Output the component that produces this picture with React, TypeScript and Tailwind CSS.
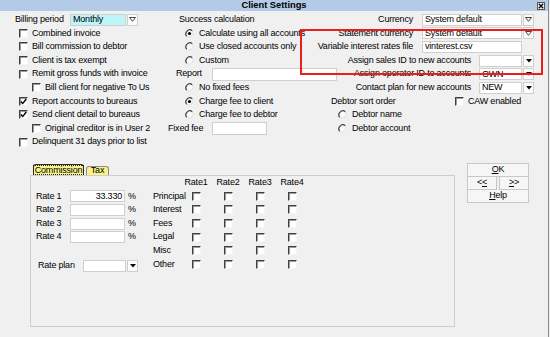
const ROW = 'flex h-[13.6px] items-center whitespace-nowrap';

function Check({ checked = false }: { checked?: boolean }) {
  return (
    <span className="inline-flex w-[9px] h-[9px] shrink-0 items-center justify-center bg-white border border-t-[#404040] border-l-[#404040] border-r-[#f4f4f4] border-b-[#f4f4f4] shadow-[inset_1px_1px_0_#9a9a9a]">
      {checked && (
        <svg width="7" height="7" viewBox="0 0 7 7">
          <path d="M0.8 3.4 L2.7 5.4 L6.3 1" stroke="#000" strokeWidth="1.4" fill="none" />
        </svg>
      )}
    </span>
  );
}

function Radio({ checked = false }: { checked?: boolean }) {
  return (
    <svg width="9" height="9" viewBox="0 0 9 9" className="shrink-0">
      <circle cx="4.5" cy="4.5" r="4" fill="#fafafa" />
      <path d="M7.3 1.7 A4 4 0 0 0 1.7 7.3" stroke="#3a3a3a" strokeWidth="1.2" fill="none" />
      <path d="M1.7 7.3 A4 4 0 0 0 7.3 1.7" stroke="#dcdcdc" strokeWidth="1" fill="none" />
      {checked && <circle cx="4.5" cy="4.5" r="1.6" fill="#000" />}
    </svg>
  );
}

function DropBtn({ filled = false }: { filled?: boolean }) {
  return (
    <span className="ml-[1px] inline-flex w-[11px] h-[12px] shrink-0 items-center justify-center bg-[#fbfbfb] border border-[#cfcfcf]">
      {filled ? (
        <svg width="6" height="4" viewBox="0 0 6 4">
          <path d="M0 0 H6 L3 3.5 Z" fill="#000" />
        </svg>
      ) : (
        <svg width="7" height="5" viewBox="0 0 7 5">
          <path d="M0.5 0.5 H6.5 L3.5 4.3 Z" stroke="#333" strokeWidth="0.9" fill="none" />
        </svg>
      )}
    </span>
  );
}

function Field({ className, value = '', right = false }: { className: string; value?: string; right?: boolean }) {
  return (
    <span
      className={`inline-flex h-[12px] shrink-0 items-center border border-[#cfcfcf] px-[2px] leading-none overflow-hidden ${
        right ? 'justify-end' : ''
      } ${className}`}
    >
      {value}
    </span>
  );
}

function CheckLabel({ text, checked, indent }: { text: string; checked?: boolean; indent?: boolean }) {
  return (
    <div className={`flex items-center gap-[4px] w-[168px] ${indent ? 'pl-[32px]' : 'pl-[19px]'}`}>
      <Check checked={checked} />
      <span>{text}</span>
    </div>
  );
}

function RadioLabel({ text, checked }: { text: string; checked?: boolean }) {
  return (
    <div className="flex items-center gap-[5px]">
      <Radio checked={checked} />
      <span>{text}</span>
    </div>
  );
}

const rateRows = ['Principal', 'Interest', 'Fees', 'Legal', 'Misc', 'Other'];

export default function App() {
  return (
    <div className="relative flex w-[550px] h-[337px] overflow-hidden bg-[#f0f0f0] text-[9px] tracking-[-0.2px] text-black font-['Liberation_Sans',Arial,sans-serif]">
      <div className="flex w-[548px] flex-col">
        {/* title bar */}
        <div className="grid h-[11px] grid-cols-[1fr_auto_1fr] items-center bg-[#b3cbe6]">
          <span />
          <span className="text-[9.3px] font-bold tracking-normal leading-none">Client Settings</span>
          <span className="mr-[3px] flex h-[8px] w-[8px] items-center justify-center justify-self-end border border-[#555] bg-[#f4f4f4]">
            <svg width="6" height="6" viewBox="0 0 6 6">
              <path d="M0.8 0.8 L5.2 5.2 M5.2 0.8 L0.8 5.2" stroke="#000" strokeWidth="1.3" />
            </svg>
          </span>
        </div>

        <div className="flex flex-col pt-[2px]">
          {/* row 0 */}
          <div className={ROW}>
            <div className="flex w-[168px] items-center pl-[15px]">
              <span className="w-[55px]">Billing period</span>
              <Field className="w-[56px] bg-[#bdf5f9]" value="Monthly" />
              <DropBtn />
            </div>
            <div className="w-[140px] pl-[11px]">Success calculation</div>
            <div className="flex flex-1 items-center justify-end pr-[14px]">
              <span className="mr-[9px]">Currency</span>
              <Field className="w-[100px] bg-white" value="System default" />
              <DropBtn />
            </div>
          </div>

          {/* row 1 */}
          <div className={ROW}>
            <CheckLabel text="Combined invoice" />
            <div className="w-[140px] pl-[17px]">
              <RadioLabel text="Calculate using all accounts" checked />
            </div>
            <div className="flex flex-1 items-center justify-end pr-[14px]">
              <span className="mr-[9px]">Statement currency</span>
              <Field className="w-[100px] bg-white" value="System default" />
              <DropBtn />
            </div>
          </div>

          {/* row 2 */}
          <div className={ROW}>
            <CheckLabel text="Bill commission to debtor" />
            <div className="w-[140px] pl-[17px]">
              <RadioLabel text="Use closed accounts only" />
            </div>
            <div className="flex flex-1 items-center justify-end pr-[14px]">
              <span className="mr-[9px]">Variable interest rates file</span>
              <Field className="w-[100px] bg-white" value="vinterest.csv" />
              <span className="w-[12px]" />
            </div>
          </div>

          {/* row 3 */}
          <div className={ROW}>
            <CheckLabel text="Client is tax exempt" />
            <div className="w-[140px] pl-[17px]">
              <RadioLabel text="Custom" />
            </div>
            <div className="flex flex-1 items-center justify-end pr-[14px]">
              <span className="mr-[8px]">Assign sales ID to new accounts</span>
              <Field className="w-[43px] bg-white" />
              <DropBtn filled />
            </div>
          </div>

          {/* row 4 */}
          <div className={ROW}>
            <CheckLabel text="Remit gross funds with invoice" />
            <div className="flex w-[170px] items-center pl-[8px]">
              <span className="w-[36px]">Report</span>
              <Field className="w-[125px] h-[13px] bg-white" />
            </div>
            <div className="flex flex-1 items-center justify-end pr-[14px]">
              <span className="mr-[8px]">Assign operator ID to accounts</span>
              <Field className="w-[43px] bg-white" value="OWN" />
              <DropBtn filled />
            </div>
          </div>

          {/* row 5 */}
          <div className={ROW}>
            <CheckLabel text="Bill client for negative To Us" indent />
            <div className="w-[140px] pl-[17px]">
              <RadioLabel text="No fixed fees" />
            </div>
            <div className="flex flex-1 items-center justify-end pr-[14px]">
              <span className="mr-[8px]">Contact plan for new accounts</span>
              <Field className="w-[43px] bg-white" value="NEW" />
              <DropBtn filled />
            </div>
          </div>

          {/* row 6 */}
          <div className={ROW}>
            <CheckLabel text="Report accounts to bureaus" checked />
            <div className="w-[163px] pl-[17px]">
              <RadioLabel text="Charge fee to client" checked />
            </div>
            <div className="flex items-center">
              <span className="w-[124px]">Debtor sort order</span>
              <div className="flex items-center gap-[4px]">
                <Check />
                <span>CAW enabled</span>
              </div>
            </div>
          </div>

          {/* row 7 */}
          <div className={ROW}>
            <CheckLabel text="Send client detail to bureaus" checked />
            <div className="w-[163px] pl-[17px]">
              <RadioLabel text="Charge fee to debtor" />
            </div>
            <div className="pl-[7px]">
              <RadioLabel text="Debtor name" />
            </div>
          </div>

          {/* row 8 */}
          <div className={ROW}>
            <CheckLabel text="Original creditor is in User 2" indent />
            <div className="flex w-[163px] items-center">
              <span className="w-[44px]">Fixed fee</span>
              <Field className="w-[55px] h-[13px] bg-white" />
            </div>
            <div className="pl-[7px]">
              <RadioLabel text="Debtor account" />
            </div>
          </div>

          {/* row 9 */}
          <div className={ROW}>
            <CheckLabel text="Delinquent 31 days prior to list" />
          </div>
        </div>

        {/* lower block */}
        <div className="mt-[14px] flex items-start">
          <div className="ml-[30px] flex w-[425px] flex-col">
            <div className="flex h-[12px] items-end pl-[3px]">
              <div className="flex h-[11px] w-[51px] items-center justify-center rounded-t-[3px] border border-b-0 border-[#2a2a2a] bg-[#f8f48a]">
                <span className="border border-dotted border-[#222] px-[1px] leading-[8px]">Commission</span>
              </div>
              <div className="ml-[2px] flex h-[9px] w-[23px] items-center justify-center rounded-t-[3px] border border-b-0 border-[#8a8a8a] bg-[#f8f48a] leading-none">
                Tax
              </div>
            </div>
            <div className="flex h-[152px] border border-[#cdcdcd]">
              {/* rate fields */}
              <div className="flex w-[122px] flex-col">
                <div className="h-[13.6px]" />
                {['Rate 1', 'Rate 2', 'Rate 3', 'Rate 4'].map((r, i) => (
                  <div key={r} className={`${ROW} pl-[5px]`}>
                    <span className="w-[34px]">{r}</span>
                    <Field className="w-[55px] bg-white" value={i === 0 ? '33.330' : ''} right />
                    <span className="ml-[3px]">%</span>
                  </div>
                ))}
                <div className="h-[13.6px]" />
                <div className={`${ROW} mt-[1.5px] pl-[7px]`}>
                  <span className="w-[45px]">Rate plan</span>
                  <Field className="w-[43px] bg-white" />
                  <DropBtn filled />
                </div>
              </div>
              {/* rate grid */}
              <div className="flex flex-col">
                <div className={ROW}>
                  <span className="w-[27px]" />
                  {['Rate1', 'Rate2', 'Rate3', 'Rate4'].map((h) => (
                    <span key={h} className="w-[32px] text-center">
                      {h}
                    </span>
                  ))}
                </div>
                {rateRows.map((r) => (
                  <div key={r} className={ROW}>
                    <span className="w-[27px]">{r}</span>
                    {[0, 1, 2, 3].map((c) => (
                      <span key={c} className="flex w-[32px] justify-center">
                        <Check />
                      </span>
                    ))}
                  </div>
                ))}
              </div>
            </div>
          </div>

          {/* buttons */}
          <div className="ml-[12px] flex w-[62px] flex-col">
            <button className="flex h-[14px] items-center justify-center border border-[#c8c8c8] bg-[#f6f6f6] leading-none">
              <span>
                <u>O</u>K
              </span>
            </button>
            <div className="flex h-[13px]">
              <button className="flex w-[30px] items-center justify-center border border-t-0 border-[#c8c8c8] bg-[#f6f6f6] leading-none">
                &lt;<u>&lt;</u>
              </button>
              <button className="ml-[2px] flex w-[30px] items-center justify-center border border-t-0 border-[#c8c8c8] bg-[#f6f6f6] leading-none">
                <u>&gt;</u>&gt;
              </button>
            </div>
            <button className="flex h-[13px] items-center justify-center border border-t-0 border-[#c8c8c8] bg-[#f6f6f6] leading-none">
              <span>
                <u>H</u>elp
              </span>
            </button>
          </div>
        </div>
      </div>

      {/* parent window edge */}
      <div className="w-[1px] bg-[#8c8c8c]" />
      <div className="w-[1px] bg-[#f0f0f0]" />

      {/* annotation box */}
      <div className="pointer-events-none absolute left-[300px] top-[29px] h-[46px] w-[243px] border-2 border-[#ee1c1c]" />
    </div>
  );
}
